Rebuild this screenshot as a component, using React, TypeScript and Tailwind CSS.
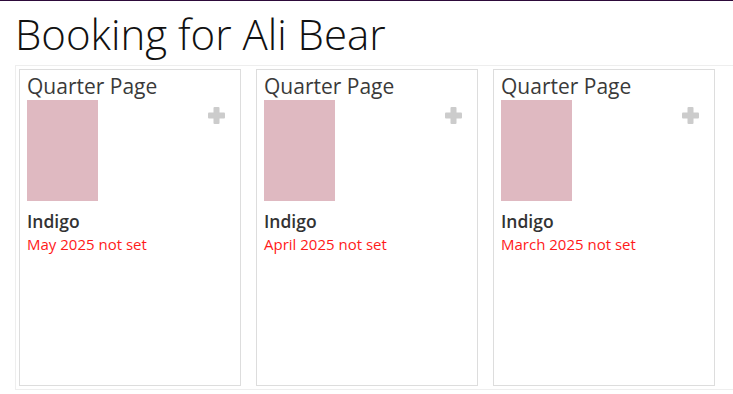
const BOOKINGS = [
  { size: "Quarter Page", title: "Indigo", month: "May 2025" },
  { size: "Quarter Page", title: "Indigo", month: "April 2025" },
  { size: "Quarter Page", title: "Indigo", month: "March 2025" },
];

function PlusIcon() {
  return (
    <svg width="17" height="17" viewBox="0 0 17 17" className="shrink-0">
      <rect x="5.5" y="0" width="6" height="17" rx="1" fill="#cccccc" />
      <rect x="0" y="5.5" width="17" height="6" rx="1" fill="#cccccc" />
    </svg>
  );
}

export default function App() {
  return (
    <div className="h-[394px] w-[733px] overflow-hidden bg-white text-[#333] font-['Open_Sans',sans-serif]">
      <div className="h-px bg-[#2d0a3a]" />
      <h1 className="pl-[15px] pt-[5px] text-[42px] leading-[55px] font-light text-[#111]">Booking for Ali Bear</h1>
      <div className="mt-[4px] ml-[15px] w-[740px] h-[325px] border border-[#eeeeee] p-[3px] flex gap-[15px]">
        {BOOKINGS.map((b) => (
          <div key={b.month} className="w-[222px] h-[317px] border border-[#dddddd] px-[7px] pt-[2px]">
            <div className="text-[21px] leading-[28px] text-[#3a3a3a]">{b.size}</div>
            <div className="flex justify-between">
              <div className="w-[71px] h-[101px] bg-[#dfb9c1]" />
              <div className="pt-[7px] pr-[8px]">
                <PlusIcon />
              </div>
            </div>
            <div className="mt-[8px] text-[17.5px] leading-[24px] font-semibold text-[#333]">{b.title}</div>
            <div className="mt-[1px] text-[15px] leading-[20px] text-[#ff1a1a]">{b.month} not set</div>
          </div>
        ))}
      </div>
    </div>
  );
}
